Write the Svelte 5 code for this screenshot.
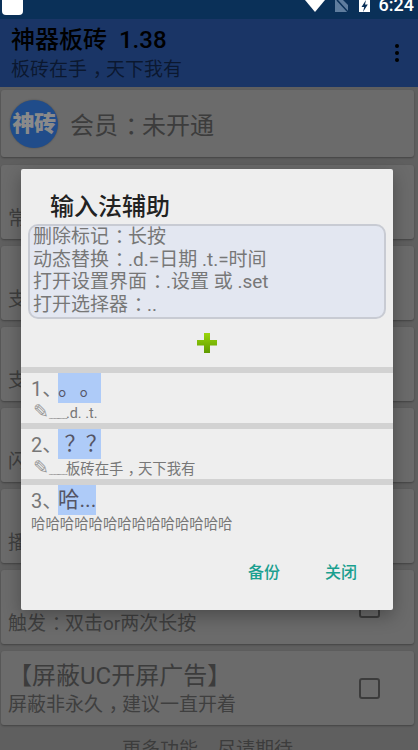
<script>
  const cards = [
    { title: '', sub: '常' },
    { title: '', sub: '支' },
    { title: '', sub: '支' },
    { title: '', sub: '闪' },
    { title: '', sub: '播' },
    { title: '', sub: '触发：双击or两次长按' },
    { title: '【屏蔽UC开屏广告】', sub: '屏蔽非永久，建议一直开着' }
  ];

  const items = [
    { title: '。。', doodle: true, sub: '.d. .t.' },
    { title: '？？', doodle: true, sub: '板砖在手，天下我有' },
    { title: '哈...', doodle: false, sub: '哈哈哈哈哈哈哈哈哈哈哈哈哈哈' }
  ];

  const hints = ['删除标记：长按', '动态替换：.d.=日期 .t.=时间', '打开设置界面：.设置 或 .set', '打开选择器：..'];

  // the reference font centres these in their cell, Noto SC does not
  const punct = /^[：，？]$/;
  const split = (text) => text.split(/([：，？])/);
</script>

{#snippet cjk(text)}{#each split(text) as part}{#if punct.test(part)}<span class="punct">{part}</span>{:else}{part}{/if}{/each}{/snippet}

<div class="screen">
  <div class="status">
    <div class="notif"></div>
    <div class="spacer"></div>
    <svg class="wifi" width="20" height="12" viewBox="0 0 20 12"><path d="M0 0H20L10 12Z" fill="#fff" /></svg>
    <svg class="sim" width="14" height="13" viewBox="0 0 14 13">
      <path d="M0 0H8L13 5V12H0Z" fill="#5f7d9e" />
      <path d="M2 0L14 13" stroke="#0a3058" stroke-width="1.5" />
    </svg>
    <svg class="batt" width="12" height="13" viewBox="0 0 12 13">
      <path d="M0 0H11V12H0Z" fill="#fff" />
      <path d="M7 0L2.5 7H5.2L4 12L8.8 4.6H6Z" fill="#0a3058" />
    </svg>
    <span class="time">6:24</span>
  </div>

  <div class="page">
    <header class="toolbar">
      <div>
        <div class="app-title">神器板砖&nbsp; 1.38</div>
        <div class="app-sub">{@render cjk('板砖在手，天下我有')}</div>
      </div>
      <div class="dots"><i></i><i></i><i></i></div>
    </header>

    <div class="list">
      <section class="card member">
        <div class="logo">神砖</div>
        <span>{@render cjk('会员：未开通')}</span>
      </section>

      {#each cards as card}
        <section class="card option">
          <div class="option-text">
            <div class="option-title">{card.title}</div>
            <div class="option-sub">{@render cjk(card.sub)}</div>
          </div>
          <div class="check"></div>
        </section>
      {/each}

      <div class="more">更多功能，尽请期待</div>
    </div>

    <div class="scrim"></div>

    <div class="dialog">
      <h2>输入法辅助</h2>
      <div class="hints">
        {#each hints as hint}
          <div>{@render cjk(hint)}</div>
        {/each}
      </div>
      <div class="add">
        <svg width="22" height="22" viewBox="0 0 22 22">
          <defs>
            <linearGradient id="plus" x1="0" y1="0" x2="0" y2="1">
              <stop offset="0" stop-color="#9ad60a" />
              <stop offset="1" stop-color="#5f9a00" />
            </linearGradient>
          </defs>
          <path d="M8 1H14V8H21V13.5H14V21H8V13.5H1V8H8Z" fill="url(#plus)" />
        </svg>
      </div>
      {#each items as item, i}
        <div class="item">
          <div class="item-head">
            <span class="num">{i + 1}、</span><span class="mark">{@render cjk(item.title)}</span>
          </div>
          <div class="item-sub">
            {#if item.doodle}<span class="pen">✎</span><span class="wave">﹏﹏</span>{/if}{@render cjk(item.sub)}
          </div>
        </div>
      {/each}
      <div class="actions">
        <span>备份</span>
        <span>关闭</span>
      </div>
    </div>
  </div>
</div>

<style>
  :global(body) {
    margin: 0;
    overflow: hidden;
  }
  .screen {
    width: 418px;
    height: 750px;
    overflow: hidden;
    font-family: Roboto, "Noto Sans CJK SC", sans-serif;
    text-spacing-trim: space-all;
    background: #b0b0b0;
  }
  .punct {
    display: inline-block;
    transform: translateX(0.3em);
  }
  .status {
    height: 19px;
    background: #0a3058;
    display: flex;
    align-items: flex-start;
    overflow: hidden;
  }
  .notif {
    width: 21px;
    height: 15px;
    margin-left: 2px;
    background: #fff;
    border-radius: 0 0 4px 4px;
  }
  .spacer {
    flex: 1;
  }
  .wifi {
    margin-right: 10px;
  }
  .sim {
    margin-right: 10px;
  }
  .batt {
    margin-right: 8px;
  }
  .time {
    color: #fff;
    font-size: 18px;
    font-weight: 500;
    line-height: 18px;
    margin-top: -4px;
    margin-right: 4px;
  }
  .page {
    position: relative;
    height: 731px;
    overflow: hidden;
  }
  .toolbar {
    height: 68px;
    background: #3062bd;
    display: flex;
    justify-content: space-between;
    padding: 0 0 0 11px;
    box-sizing: border-box;
  }
  .app-title {
    font-size: 24px;
    font-weight: 500;
    line-height: 30px;
    margin-top: 6px;
    color: #000;
  }
  .app-sub {
    font-size: 19px;
    line-height: 26px;
    margin-top: 2px;
    color: rgba(0, 0, 0, 0.55);
  }
  .dots {
    width: 42px;
    display: flex;
    flex-direction: column;
    align-items: center;
    justify-content: center;
    gap: 2.5px;
  }
  .dots i {
    width: 4.5px;
    height: 4.5px;
    border-radius: 50%;
    background: #000;
  }
  .list {
    padding: 3px 4px 0 1px;
    display: flex;
    flex-direction: column;
  }
  .card {
    background: #c6c6c6;
    border-radius: 3px;
    box-shadow: 0 1px 2px rgba(0, 0, 0, 0.3);
    box-sizing: border-box;
    margin-bottom: 7px;
  }
  .member {
    height: 67px;
    margin-bottom: 8px;
    display: flex;
    align-items: center;
    padding-left: 9px;
    font-size: 24px;
    color: #707070;
  }
  .logo {
    width: 48px;
    height: 48px;
    border-radius: 50%;
    background: #3b8cff;
    color: #fff;
    font-size: 22px;
    font-weight: 900;
    line-height: 48px;
    text-align: center;
    letter-spacing: -0.5px;
    margin-right: 12px;
    box-shadow: 0 0 2px rgba(0, 0, 0, 0.3);
    flex: none;
  }
  .option {
    height: 74px;
    display: flex;
    align-items: center;
    padding: 0 34px 0 7px;
  }
  .option-text {
    flex: 1;
    align-self: flex-start;
    padding-top: 10px;
  }
  .option-title {
    font-size: 24px;
    line-height: 30px;
    height: 30px;
    color: #707070;
  }
  .option-sub {
    font-size: 19px;
    line-height: 26px;
    color: #757575;
    margin-top: 1px;
  }
  .check {
    width: 17px;
    height: 17px;
    border: 2.5px solid #707070;
    border-radius: 3px;
    flex: none;
  }
  .more {
    font-size: 19px;
    line-height: 24px;
    color: #707070;
    text-align: center;
    margin-top: 6px;
  }
  .scrim {
    position: absolute;
    inset: 0;
    background: rgba(0, 0, 0, 0.46);
  }
  .dialog {
    position: absolute;
    left: 21px;
    top: 150px;
    width: 372px;
    height: 441px;
    background: #eee;
    border-radius: 2px;
    box-shadow: 0 6px 18px rgba(0, 0, 0, 0.3);
    display: flex;
    flex-direction: column;
  }
  h2 {
    margin: 23px 0 0 29px;
    font-size: 24px;
    font-weight: 500;
    line-height: 30px;
    color: #222;
  }
  .hints {
    margin: 2px 7px 0;
    height: 95px;
    box-sizing: border-box;
    padding: 0 3px;
    background: #e3e7f1;
    border: 2px solid #c8cbd3;
    border-radius: 10px;
    font-size: 19px;
    line-height: 22.6px;
    color: #777;
    white-space: nowrap;
  }
  .add {
    height: 48px;
    display: flex;
    align-items: center;
    justify-content: center;
  }
  .item {
    border-top: 6px solid #d2d2d2;
    height: 50px;
    padding-left: 10px;
  }
  .item-head {
    display: flex;
    height: 30px;
    line-height: 32px;
  }
  .num {
    font-size: 20px;
    color: #777;
    width: 27px;
  }
  .mark {
    font-size: 21.4px;
    line-height: 30px;
    color: #556;
    background: #aecbf8;
    white-space: pre;
  }
  .item-sub {
    font-size: 14.4px;
    line-height: 20px;
    height: 20px;
    color: #777;
    white-space: nowrap;
  }
  .pen {
    font-family: "DejaVu Sans", sans-serif;
    font-size: 19px;
    line-height: 16px;
    color: #999;
    margin-left: 2px;
  }
  .wave {
    font-size: 10px;
    line-height: 16px;
    letter-spacing: -1.5px;
    color: #888;
  }
  .actions {
    margin-top: auto;
    height: 71px;
    box-sizing: border-box;
    display: flex;
    justify-content: flex-end;
    gap: 45px;
    padding: 10px 36px 0 0;
    font-size: 16px;
    font-weight: 500;
    line-height: 48px;
    color: #1a9f8f;
  }
</style>
